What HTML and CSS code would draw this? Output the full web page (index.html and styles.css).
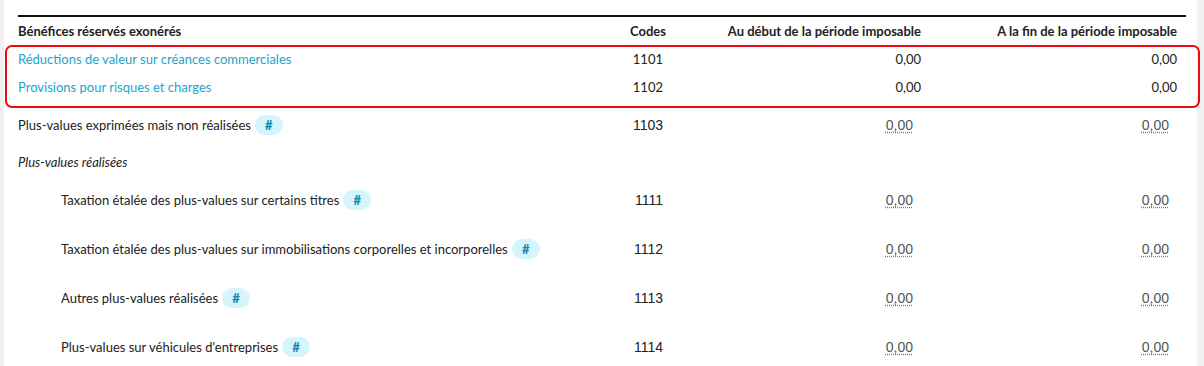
FILE: index.html
```html
<!DOCTYPE html>
<html lang="fr">
<head>
<meta charset="utf-8">
<title>Bénéfices réservés exonérés</title>
<link rel="stylesheet" href="styles.css">
</head>
<body>
<div class="page">
  <div class="card">
    <div class="row head">
      <div class="c-label">Bénéfices réservés exonérés</div>
      <div class="c-code">Codes</div>
      <div class="c-val">Au début de la période imposable</div>
      <div class="c-val">A la fin de la période imposable</div>
    </div>
    <div class="highlight">
      <div class="row link-row">
        <div class="c-label"><span class="link">Réductions de valeur sur créances commerciales</span></div>
        <div class="c-code">1101</div>
        <div class="c-val">0,00</div>
        <div class="c-val">0,00</div>
      </div>
      <div class="row link-row">
        <div class="c-label"><span class="link">Provisions pour risques et charges</span></div>
        <div class="c-code">1102</div>
        <div class="c-val">0,00</div>
        <div class="c-val">0,00</div>
      </div>
    </div>
    <div class="row first-form">
      <div class="c-label">Plus-values exprimées mais non réalisées <span class="tag">#</span></div>
      <div class="c-code code-f">1103</div>
      <div class="c-val"><span class="num">0,00</span></div>
      <div class="c-val"><span class="num">0,00</span></div>
    </div>
    <div class="row section">
      <div class="c-label"><em>Plus-values réalisées</em></div>
    </div>
    <div class="row form">
      <div class="c-label sub">Taxation étalée des plus-values sur certains titres <span class="tag">#</span></div>
      <div class="c-code code-f">1111</div>
      <div class="c-val"><span class="num">0,00</span></div>
      <div class="c-val"><span class="num">0,00</span></div>
    </div>
    <div class="row form">
      <div class="c-label sub">Taxation étalée des plus-values sur immobilisations corporelles et incorporelles <span class="tag">#</span></div>
      <div class="c-code code-f">1112</div>
      <div class="c-val"><span class="num">0,00</span></div>
      <div class="c-val"><span class="num">0,00</span></div>
    </div>
    <div class="row form">
      <div class="c-label sub">Autres plus-values réalisées <span class="tag">#</span></div>
      <div class="c-code code-f">1113</div>
      <div class="c-val"><span class="num">0,00</span></div>
      <div class="c-val"><span class="num">0,00</span></div>
    </div>
    <div class="row form">
      <div class="c-label sub">Plus-values sur véhicules d'entreprises <span class="tag">#</span></div>
      <div class="c-code code-f">1114</div>
      <div class="c-val"><span class="num">0,00</span></div>
      <div class="c-val"><span class="num">0,00</span></div>
    </div>
  </div>
</div>
</body>
</html>
```
FILE: styles.css
```css
html, body {
  margin: 0;
  padding: 0;
  background: #f1f1f1;
}
body {
  font-family: Lato, "Liberation Sans", sans-serif;
  font-size: 13px;
  color: #222;
}
.page {
  width: 1204px;
  height: 366px;
  overflow: hidden;
  box-sizing: border-box;
  padding: 0 7px 0 4px;
}
.card {
  background: #fff;
  height: 100%;
  box-sizing: border-box;
  padding: 15px 11px 0 14px;
}
.row {
  display: grid;
  grid-template-columns: 556px 100px 255px 256px;
  align-items: center;
  line-height: 16px;
}
.c-label {
  display: flex;
  align-items: center;
  white-space: nowrap;
}
.c-code, .c-val {
  text-align: right;
  padding-right: 8px;
}
.head {
  border-top: 2px solid #111;
  height: 28px;
  font-weight: 700;
}
.highlight {
  margin: 0 -14px 0 -13px;
  padding: 0 12px 7px 11px;
  border: 2px solid #ee0a12;
  border-radius: 7px;
  display: flex;
  flex-direction: column;
  gap: 4px;
}
.link-row {
  height: 24px;
}
.link-row .c-code {
  padding-right: 11px;
}
.link {
  color: #1aa6cd;
}
.first-form {
  height: 34px;
}
.section {
  height: 33px;
  padding-top: 6px;
  box-sizing: border-box;
}
.section em {
  font-style: italic;
}
.form {
  height: 49px;
}
.sub {
  padding-left: 43px;
}
.code-f {
  font-family: "Liberation Sans", Arial, sans-serif;
  font-size: 14px;
  padding-right: 11px;
}
.num {
  font-family: "Liberation Sans", Arial, sans-serif;
  font-size: 14px;
  color: #555;
  text-decoration: underline dotted #777;
  text-underline-offset: 2px;
  margin-right: 8px;
}
.tag {
  display: inline-flex;
  align-items: center;
  justify-content: center;
  width: 28px;
  height: 20px;
  margin-left: 4px;
  border-radius: 10px;
  background: #d4f5fc;
  color: #1787b0;
  font-weight: 900;
  font-size: 13px;
}
```
